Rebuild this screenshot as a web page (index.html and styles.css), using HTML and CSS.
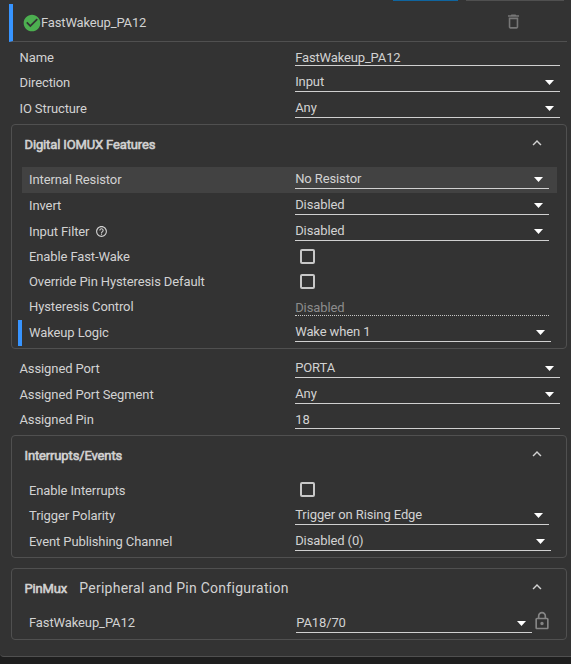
FILE: index.html
```html
<!DOCTYPE html>
<html lang="en">
<head>
<meta charset="utf-8">
<title>FastWakeup_PA12</title>
<link rel="stylesheet" href="styles.css">
</head>
<body>
<svg width="0" height="0" class="defs">
  <symbol id="chevron" viewBox="0 0 24 24"><path d="M12 8l-6 6 1.41 1.41L12 10.83l4.59 4.58L18 14z"/></symbol>
</svg>
<main class="panel">
  <div class="toolbar"><span class="btn primary"></span><span class="btn"></span></div>
  <header class="head">
    <svg class="check" viewBox="0 0 24 24"><path d="M12 2C6.48 2 2 6.48 2 12s4.48 10 10 10 10-4.48 10-10S17.52 2 12 2zm-2 15l-5-5 1.41-1.41L10 14.17l7.59-7.59L19 8l-9 9z"/></svg>
    <span class="title">FastWakeup_PA12</span>
    <svg class="trash" viewBox="0 0 24 24"><path d="M6 19c0 1.1.9 2 2 2h8c1.100 0 2-.9 2-2V7H6v12zM8 9h8v10H8V9zm7.500-5l-1-1h-5l-1 1H5v2h14V4z"/></svg>
  </header>

  <div class="rows outer">
    <div class="row short"><label>Name</label><div class="field input name">FastWakeup_PA12</div></div>
    <div class="row"><label>Direction</label><div class="field select">Input</div></div>
    <div class="row"><label>IO Structure</label><div class="field select">Any</div></div>
  </div>

  <section class="group digital">
    <div class="group-head"><h2>Digital IOMUX Features</h2><svg class="chev"><use href="#chevron"/></svg></div>
    <div class="rows">
      <div class="row hover"><label>Internal Resistor</label><div class="field select">No Resistor</div></div>
      <div class="row"><label>Invert</label><div class="field select">Disabled</div></div>
      <div class="row short"><label>Input Filter <svg class="help" viewBox="0 0 24 24"><path d="M11 18h2v-2h-2v2zm1-16C6.480 2 2 6.480 2 12s4.480 10 10 10 10-4.480 10-10S17.520 2 12 2zm0 18c-4.410 0-8-3.590-8-8s3.590-8 8-8 8 3.590 8 8-3.590 8-8 8zm0-14c-2.210 0-4 1.790-4 4h2c0-1.100.9-2 2-2s2 .9 2 2c0 2-3 1.750-3 5h2c0-2.250 3-2.500 3-5 0-2.210-1.790-4-4-4z"/></svg></label><div class="field select">Disabled</div></div>
      <div class="row short"><label>Enable Fast-Wake</label><span class="box"></span></div>
      <div class="row short"><label>Override Pin Hysteresis Default</label><span class="box"></span></div>
      <div class="row"><label>Hysteresis Control</label><div class="field input disabled">Disabled</div></div>
      <div class="row changed"><label>Wakeup Logic</label><div class="field select wide">Wake when 1</div></div>
    </div>
  </section>

  <div class="rows outer ports">
    <div class="row"><label>Assigned Port</label><div class="field select">PORTA</div></div>
    <div class="row short"><label>Assigned Port Segment</label><div class="field select">Any</div></div>
    <div class="row"><label>Assigned Pin</label><div class="field input">18</div></div>
  </div>

  <section class="group events">
    <div class="group-head"><h2>Interrupts/Events</h2><svg class="chev"><use href="#chevron"/></svg></div>
    <div class="rows">
      <div class="row short"><label>Enable Interrupts</label><span class="box"></span></div>
      <div class="row"><label>Trigger Polarity</label><div class="field select">Trigger on Rising Edge</div></div>
      <div class="row"><label>Event Publishing Channel</label><div class="field select wide">Disabled (0)</div></div>
    </div>
  </section>

  <section class="group pinmux">
    <div class="group-head"><h2>PinMux</h2><span class="sub">Peripheral and Pin Configuration</span><svg class="chev"><use href="#chevron"/></svg></div>
    <div class="rows">
      <div class="row"><label>FastWakeup_PA12</label><div class="field select pin">PA18/70</div>
        <svg class="lock" viewBox="0 0 24 24"><path d="M18 8h-1V6c0-2.760-2.240-5-5-5S7 3.240 7 6v2H6c-1.100 0-2 .9-2 2v10c0 1.100.9 2 2 2h12c1.100 0 2-.9 2-2V10c0-1.100-.9-2-2-2zM9 6c0-1.660 1.340-3 3-3s3 1.340 3 3v2H9V6zm9 14H6V10h12v10zm-6-3c1.100 0 2-.9 2-2s-.9-2-2-2-2 .9-2 2 .9 2 2 2z"/></svg>
      </div>
    </div>
  </section>
</main>
</body>
</html>
```
FILE: styles.css
```css
* { box-sizing: border-box; }
body {
  margin: 0;
  height: 664px;
  overflow: hidden;
  background: #1e1e1e;
  color: #d2d2d2;
  font: 13px/16px Roboto, "Liberation Sans", sans-serif;
  letter-spacing: -0.11px;
}
.defs { position: absolute; }
svg { fill: currentColor; flex: none; }
.panel {
  display: flex;
  flex-direction: column;
  height: 657px;
  padding: 0 4px 0 11px;
  background: #333;
  border-bottom: 1px solid #505050;
  border-bottom-left-radius: 4px;
}
.toolbar {
  display: flex;
  justify-content: flex-end;
  gap: 8px;
  height: 4px;
  padding-right: 3px;
}
.btn { width: 98px; height: 1px; background: #505050; }
.btn.primary { width: 65px; background: #0f659f; }
.head {
  display: flex;
  align-items: center;
  height: 38px;
  margin-left: -2px;
  border-left: 4px solid #3794ff;
  border-bottom: 1px solid #505050;
  padding-left: 9px;
}
.check { width: 20px; height: 20px; fill: #4caf50; }
.title { flex: 1; margin-left: -1px; letter-spacing: -0.15px; }
.trash { width: 19px; height: 19px; margin-right: 44px; margin-top: -2px; fill: #777; }

.row {
  display: grid;
  grid-template-columns: 266px 1fr;
  height: 26px;
  padding: 0 8px 0 7px;
}
.row.short { height: 25px; }
.row label { display: flex; align-items: center; height: 16px; margin-top: 5px; }
.outer { padding-top: 3px; }
.outer .row { grid-template-columns: 275.5px 1fr; padding: 0 7px 0 8.5px; }
.ports { padding-top: 7px; height: 86px; }
.field {
  position: relative;
  height: 22px;
  padding: 4px 0 0 0.2px;
  border-bottom: 1px solid #d0d0d0;
}
.field.input { padding-top: 5px; }
.field.name { height: 21px; letter-spacing: -0.15px; }
.field.disabled { padding-top: 6px; color: #8c8c8c; border-bottom: 1px dotted #c8c8c8; }
.field.wide { margin-right: -2px; }
.select::after {
  content: "";
  position: absolute;
  right: 6px;
  top: 10px;
  width: 9px;
  height: 5px;
  background: #fff;
  clip-path: polygon(0 0, 100% 0, 50% 100%);
}
.box {
  width: 15px;
  height: 15px;
  margin: 5px 0 0 5px;
  border: 2px solid #c8c8c8;
  border-radius: 2px;
}
.events .box { margin-top: 4px; }
.group { border: 1px solid #505050; border-radius: 4px; width: 556px; padding: 0 9px 0 10px; }
.group-head { display: flex; align-items: flex-start; height: 42px; padding: 12px 11.5px 0 2.5px; }
h2 {
  margin: 0;
  font-size: 13px;
  font-weight: 400;
  line-height: 16px;
  letter-spacing: -0.14px;
  -webkit-text-stroke: 0.6px currentColor;
}
.sub { margin: -1px 0 0 12px; font-size: 14px; letter-spacing: 0.27px; }
.chev { width: 18px; height: 18px; margin: -3px 0 0 auto; }
.digital { height: 225px; margin-top: 2px; }
.hover { background: #424242; }
.changed { box-shadow: -4px 0 #3794ff; }
.help { width: 13px; height: 13px; margin: -1px 0 0 6px; }
.events { height: 123px; }
.pinmux { height: 72px; margin-top: 10px; }
.pinmux .group-head { height: 41px; }
.pinmux .row { grid-template-columns: 267px 236px 20px; padding-right: 0; }
.field.pin { padding-top: 5px; height: 23px; }
.field.pin::after { top: 11px; }
.lock { width: 20px; height: 20px; margin: 0.5px 0 0 -0.5px; fill: #858585; }
```
